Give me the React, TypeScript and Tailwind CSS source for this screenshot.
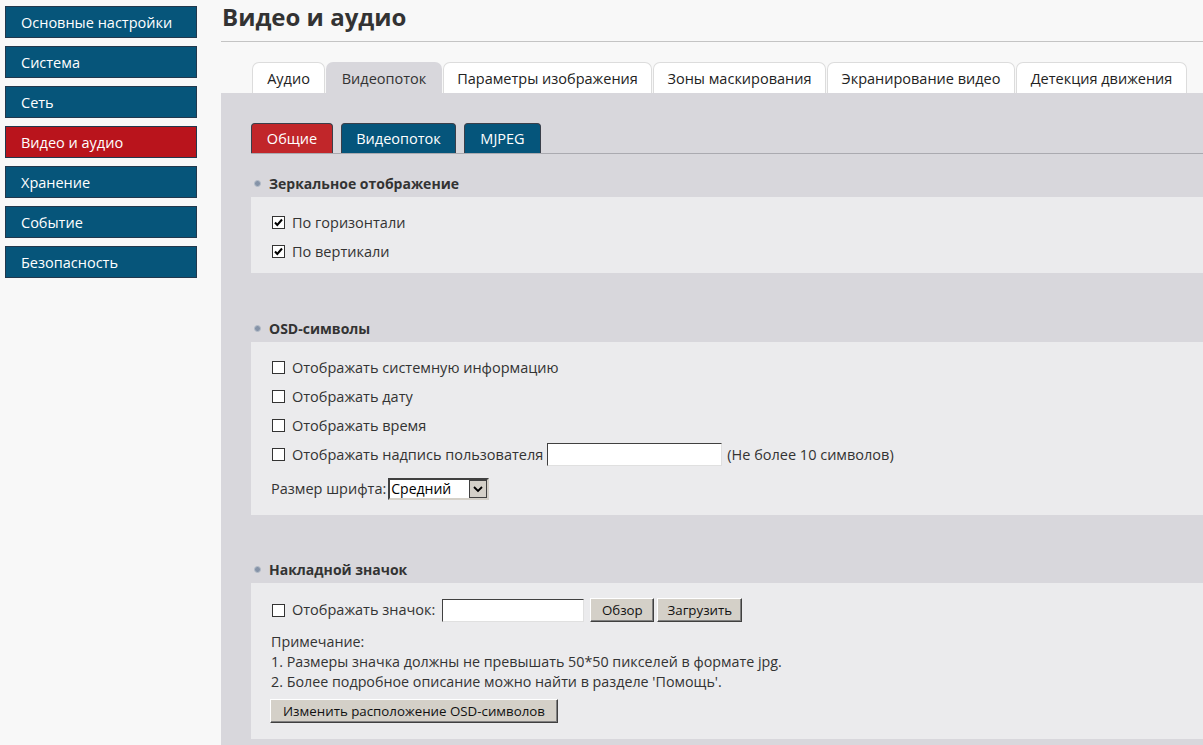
import React from "react";

const font = { fontFamily: '"Open Sans", "Noto Sans", sans-serif' };

function Check({ checked }: { checked?: boolean }) {
  return (
    <span className="inline-flex w-[13px] h-[13px] border border-[#333] bg-white shrink-0 items-center justify-center">
      {checked && (
        <svg width="11" height="11" viewBox="0 0 11 11">
          <path d="M2 5.5 L4.3 8 L9 2.5" fill="none" stroke="#000" strokeWidth="2" />
        </svg>
      )}
    </span>
  );
}

function Row({ checked, label, children }: { checked?: boolean; label: string; children?: React.ReactNode }) {
  return (
    <div className="flex items-center h-[29px] whitespace-nowrap">
      <Check checked={checked} />
      <span className="ml-[7px]">{label}</span>
      {children}
    </div>
  );
}

function Heading({ text, className }: { text: string; className: string }) {
  return (
    <div className={`flex items-center h-[27px] pl-[3px] ${className}`}>
      <span className="w-[7px] h-[7px] rounded-full bg-[#8593a8] border border-[#b5bdc9]" />
      <span className="ml-[8px] font-bold text-[14px] text-[#333]">{text}</span>
    </div>
  );
}

function Btn({ children, className = "" }: { children: React.ReactNode; className?: string }) {
  return (
    <button
      className={`h-[24px] bg-[#d4d0c8] text-[13.3px] leading-[20px] text-[#111] whitespace-nowrap border border-t-white border-l-white border-b-[#404040] border-r-[#404040] shadow-[inset_-1px_-1px_0_#808080] ${className}`}
    >
      {children}
    </button>
  );
}

function TextInput({ w }: { w: string }) {
  return (
    <span
      className={`inline-block h-[23px] bg-white border border-t-[#404040] border-l-[#404040] border-b-[#e0e0e0] border-r-[#e0e0e0] ${w}`}
    />
  );
}

export default function App() {
  const side = ["Основные настройки", "Система", "Сеть", "Видео и аудио", "Хранение", "Событие", "Безопасность"];
  const tabs: [string, string][] = [
    ["Аудио", "w-[73px]"],
    ["Видеопоток", "w-[116px]"],
    ["Параметры изображения", "w-[209px]"],
    ["Зоны маскирования", "w-[173px]"],
    ["Экранирование видео", "w-[188px]"],
    ["Детекция движения", "w-[171px]"],
  ];
  return (
    <div className="flex min-h-[745px] bg-[#f8f8f8] text-[#333]" style={font}>
      <div className="w-[221px] shrink-0 pl-[5px] pt-[6px] flex flex-col gap-[8px]">
        {side.map((s) => (
          <div
            key={s}
            className={`w-[192px] h-[32px] flex items-center pl-[15px] pt-[1px] text-[14.5px] text-white border border-[#22384d] ${
              s === "Видео и аудио" ? "bg-[#b9141c]" : "bg-[#06557a]"
            }`}
          >
            {s}
          </div>
        ))}
      </div>
      <div className="flex-1 flex flex-col min-w-0">
        <div className="h-[42px] border-b border-[#c4c4c4] pl-[1px] pt-[1px]">
          <h1 className="text-[24px] font-bold leading-[32px] text-[#333]">Видео и аудио</h1>
        </div>
        <div className="flex pl-[31px] mt-[20px] h-[31px] items-end gap-[1px]">
          {tabs.map(([t, w]) => (
            <div
              key={t}
              className={`h-[31px] shrink-0 whitespace-nowrap flex items-center justify-center pt-[2px] text-[14.5px] rounded-t-[7px] ${w} ${
                t === "Видеопоток"
                  ? "bg-[#d8d7dc] text-[#333]"
                  : "bg-white border border-b-0 border-[#dcdcdc] text-[#222]"
              }`}
            >
              {t}
            </div>
          ))}
        </div>
        <div className="flex-1 bg-[#d8d7dc] pl-[30px] pt-[30px] pb-[6px]">
          <div className="flex gap-[8px] h-[31px] border-b border-[#aaaab0]">
            {[
              ["Общие", "bg-[#c1262a] w-[82px]"],
              ["Видеопоток", "bg-[#05557b] w-[115px]"],
              ["MJPEG", "bg-[#05557b] w-[77px]"],
            ].map(([t, c]) => (
              <div
                key={t}
                className={`h-[30px] flex items-center justify-center pt-[1px] text-white text-[14.5px] rounded-t-[4px] border border-b-0 border-[#3a3f4a] ${c}`}
              >
                {t}
              </div>
            ))}
          </div>

          <Heading text="Зеркальное отображение" className="mt-[16px]" />
          <div className="bg-[#ebebed] pl-[21px] pt-[11px] pb-[7px] text-[14.5px]">
            <Row checked label="По горизонтали" />
            <Row checked label="По вертикали" />
          </div>

          <Heading text="OSD-символы" className="mt-[42px]" />
          <div className="bg-[#ebebed] pl-[21px] pt-[11px] pb-[11px] text-[14.5px]">
            <Row label="Отображать системную информацию" />
            <Row label="Отображать дату" />
            <Row label="Отображать время" />
            <Row label="Отображать надпись пользователя">
              <span className="ml-[4px] flex">
                <TextInput w="w-[175px]" />
              </span>
              <span className="ml-[5px]">(Не более 10 символов)</span>
            </Row>
            <div className="flex items-center h-[30px] mt-[5px] -ml-[1px]">
              <span>Размер шрифта:</span>
              <span className="ml-[2px] w-[101px] h-[22px] flex bg-white border-2 border-t-[#404040] border-l-[#404040] border-b-[#d4d0c8] border-r-[#d4d0c8]">
                <span className="flex-1 text-[14px] leading-[18px] pl-[1px] text-black">Средний</span>
                <span className="w-[18px] h-[18px] bg-[#d4d0c8] border border-[#404040] flex items-center justify-center">
                  <svg width="10" height="8" viewBox="0 0 10 8">
                    <path d="M1 2 L5 6 L9 2" fill="none" stroke="#000" strokeWidth="1.8" />
                  </svg>
                </span>
              </span>
            </div>
          </div>

          <Heading text="Накладной значок" className="mt-[41px]" />
          <div className="bg-[#ebebed] pl-[21px] pt-[12px] pb-[16px] text-[14.5px]">
            <div className="flex items-center h-[30px] whitespace-nowrap">
              <Check />
              <span className="ml-[7px]">Отображать значок:</span>
              <span className="ml-[7px] flex">
                <TextInput w="w-[142px]" />
              </span>
              <Btn className="ml-[6px] w-[64px]">Обзор</Btn>
              <Btn className="ml-[3px] w-[85px]">Загрузить</Btn>
            </div>
            <div className="mt-[7px] text-[14.3px] leading-[20px] -ml-[1px] whitespace-nowrap">
              <div>Примечание:</div>
              <div>1. Размеры значка должны не превышать 50*50 пикселей в формате jpg.</div>
              <div>2. Более подробное описание можно найти в разделе 'Помощь'.</div>
            </div>
            <Btn className="mt-[7px] -ml-[2px] w-[288px]">Изменить расположение OSD-символов</Btn>
          </div>
        </div>
      </div>
    </div>
  );
}
